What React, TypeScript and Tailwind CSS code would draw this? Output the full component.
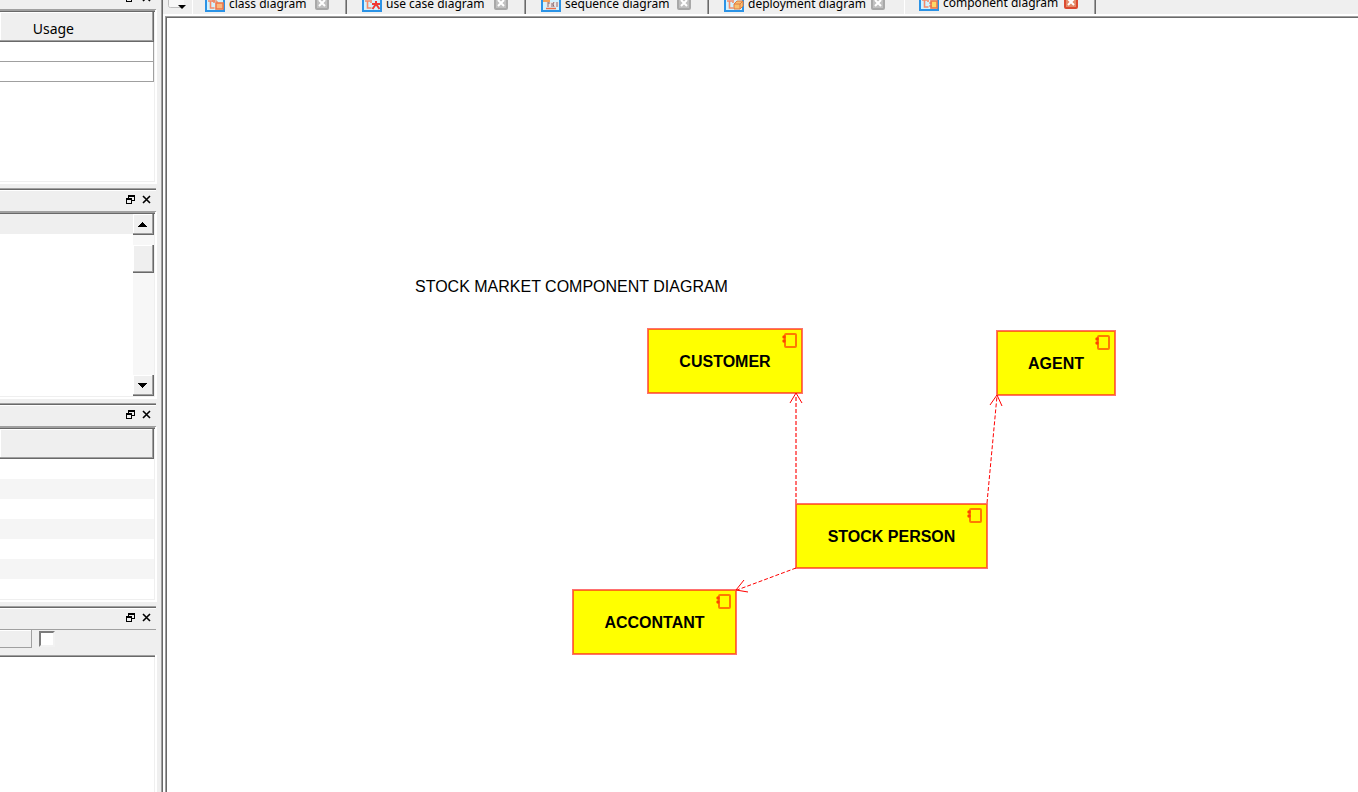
import React from "react";

type TabKind = "class" | "usecase" | "sequence" | "deployment" | "component";

const tabs: { kind: TabKind; label: string; box: string; active?: boolean }[] = [
  { kind: "class", label: "class diagram", box: "w-[154px] pl-3 pr-[17px]" },
  { kind: "usecase", label: "use case diagram", box: "w-[179px] pl-[15px] pr-[17px]" },
  { kind: "sequence", label: "sequence diagram", box: "w-[183px] pl-[15px] pr-[17px]" },
  { kind: "deployment", label: "deployment diagram", box: "w-[196px] pl-[15px] pr-[19px]" },
  { kind: "component", label: "component diagram", box: "w-[191px] pl-[14px] pr-[17px]", active: true },
];

function TabIcon({ kind }: { kind: TabKind }) {
  return (
    <svg width="20" height="16" viewBox="0 0 20 16" className="shrink-0" aria-hidden="true">
      <rect x="1" y="1" width="18" height="14" fill="#d3f2fe" stroke="#2b93e6" strokeWidth="2" />
      {kind === "sequence" ? (
        <>
          <rect x="2" y="2" width="7" height="4" fill="#f3a25c" />
          <rect x="5" y="6" width="13" height="5" fill="#ede6e4" />
          <path d="M7 6v5M9 7H7M11 7v4M13 6l-1 2 1 3M16 6v5" stroke="#8a6c72" fill="none" />
          <path d="M5 12.500h10" stroke="#f0704a" strokeWidth="1.500" />
        </>
      ) : (
        <path d="M3 5h5M5.500 5v7h4M9 3v4" stroke="#f58a6a" strokeWidth="1.600" fill="none" />
      )}
      {kind === "class" && (
        <>
          <rect x="11" y="7" width="7" height="6" fill="#fbb980" stroke="#f0784c" strokeWidth="1.600" />
          <path d="M7 5h5v2" stroke="#f0784c" fill="none" />
        </>
      )}
      {kind === "deployment" && (
        <>
          <path d="M10 8l3-3h6v5l-3 3h-6z" fill="#f8c070" stroke="#e07a42" />
          <path d="M10 8h6v5M16 8l3-3" fill="none" stroke="#e07a42" />
        </>
      )}
      {kind === "component" && (
        <>
          <rect x="12" y="6" width="6" height="7" fill="#ffd967" stroke="#f0784c" strokeWidth="1.600" />
          <path d="M10 8h3M10 11h3" stroke="#ee6b45" />
        </>
      )}
      {kind === "usecase" && (
        <path d="M10 8h8M14 5v4M14 8l-3.500 5M14 8l3.500 5" stroke="#f03a34" strokeWidth="2" fill="none" />
      )}
    </svg>
  );
}

function DiagramTab({ kind, label, box, active }: (typeof tabs)[number]) {
  const edge =
    kind === "deployment"
      ? "border-r border-white"
      : "border-r border-[#696969] shadow-[inset_-1px_0_0_#a0a0a0]";
  return (
    <div className={`flex h-[14px] shrink-0 items-start ${edge} ${box}`}>
      <div className={`flex h-5 grow items-center ${active ? "-mt-[7px]" : "-mt-[6px]"}`}>
        <TabIcon kind={kind} />
        <a href={`#${kind}`} className="ml-1 whitespace-nowrap">
          {label}
        </a>
        <button
          aria-label={`Close ${label}`}
          className={`mb-0.5 ml-auto flex h-[14px] w-[14px] shrink-0 items-center justify-center rounded-[2px] border-2 ${
            active ? "border-[#dc4a30] bg-[#e48a68]" : "border-[#a8a8a8] bg-[#c0c0c0]"
          }`}
        >
          <svg width="8" height="8" viewBox="0 0 8 8" aria-hidden="true">
            <path d="M1 1l6 6M7 1l-6 6" stroke="#fff" strokeWidth="2" />
          </svg>
        </button>
      </div>
    </div>
  );
}

function DockTitle({ name, className = "" }: { name: string; className?: string }) {
  return (
    <header
      className={`flex h-6 w-[156px] shrink-0 flex-col border-t border-b border-[#a0a0a0] bg-[#efefef] ${className}`}
    >
      <div className="h-0.5 border-t border-b border-t-[#696969] border-b-white" />
      <div className="flex items-start justify-end gap-[7px] pt-1 pr-[5px]">
        <button aria-label={`Float ${name}`}>
          <svg width="9" height="9" viewBox="0 0 9 9" shapeRendering="crispEdges" aria-hidden="true">
            <path d="M2 0h7v6H6V5h2V2H3v1H2zM0 3h6v6H0zM1 5v3h4V5z" fillRule="evenodd" />
          </svg>
        </button>
        <button aria-label={`Close ${name}`}>
          <svg width="9" height="9" viewBox="0 0 9 9" aria-hidden="true">
            <path d="M1 1l7 7M8 1l-7 7" stroke="#000" strokeWidth="1.600" />
          </svg>
        </button>
      </div>
    </header>
  );
}

function Frame({ className, children }: { className: string; children?: React.ReactNode }) {
  return (
    <div className={`flex w-[157px] flex-col border-r-2 border-b-2 border-white ${className}`}>
      <div className="h-0.5 shrink-0 border-t border-b border-t-[#a0a0a0] border-b-[#696969]" />
      <div className="flex grow flex-col border-r border-b border-[#efefef] bg-white">{children}</div>
    </div>
  );
}

const raised =
  "border-r border-b border-[#696969] bg-[#efefef] shadow-[inset_-1px_-1px_0_#a0a0a0,inset_1px_1px_0_#ffffff]";

function ScrollArrow({ down }: { down?: boolean }) {
  return (
    <button
      aria-label={down ? "Scroll down" : "Scroll up"}
      className={`flex h-[21px] w-full shrink-0 items-center justify-center pr-px ${raised}`}
    >
      <svg width="9" height="5" viewBox="0 0 9 5" shapeRendering="crispEdges" aria-hidden="true">
        <path d={down ? "M0 0h9L5 5H4z" : "M0 5h9L5 0H4z"} />
      </svg>
    </button>
  );
}

function ComponentNode({ name, place }: { name: string; place: string }) {
  return (
    <div
      className={`absolute flex h-[66px] items-center justify-center border border-[#ff7070] bg-[#ffff00] pt-px text-base font-bold text-black shadow-[inset_0_0_0_1px_#ff7010] ${place}`}
    >
      {name}
      <svg width="16" height="16" viewBox="0 0 16 16" className="absolute top-[3px] right-1" aria-hidden="true">
        <rect x="3" y="2" width="11" height="13" rx="1" fill="none" stroke="#ff7a00" strokeWidth="2" />
        <circle cx="2" cy="5" r="1.700" fill="#ff4400" />
        <circle cx="2" cy="9" r="1.700" fill="#ff4400" />
      </svg>
    </div>
  );
}

const nodes = [
  { name: "CUSTOMER", place: "top-[310px] left-[480px] w-[156px]" },
  { name: "AGENT", place: "top-[312px] left-[829px] w-[120px]" },
  { name: "STOCK PERSON", place: "top-[485px] left-[628px] w-[193px]" },
  { name: "ACCONTANT", place: "top-[571px] left-[405px] w-[165px]" },
];

export default function App() {
  return (
    <div className="flex h-screen overflow-hidden bg-[#efefef] text-black">
      <aside className="flex w-[161px] shrink-0 flex-col font-['Noto_Sans',sans-serif]">
        <DockTitle name="overview" className="-mt-[14px]" />
        <Frame className="mb-1 h-[174px] shrink-0">
          <table className="w-full border-separate border-spacing-0">
            <thead>
              <tr>
                <th className={`h-[30px] p-0 pt-1 pr-[79px] text-right text-sm font-normal ${raised}`}>
                  Usage
                </th>
              </tr>
            </thead>
            <tbody>
              <tr>
                <td className="h-5 border-r border-b border-[#a0a0a0] p-0" />
              </tr>
              <tr>
                <td className="h-5 border-r border-b border-[#a0a0a0] p-0" />
              </tr>
            </tbody>
          </table>
        </Frame>

        <DockTitle name="list" />
        <Frame className="mb-1 h-[187px] shrink-0">
          <div className="flex grow">
            <div className="grow">
              <div className="h-5 bg-[#efefef]" />
            </div>
            <div className="flex w-[21px] flex-col bg-[#f7f7f7]">
              <ScrollArrow />
              <div className={`mt-[10px] h-7 ${raised}`} />
              <div className="grow" />
              <ScrollArrow down />
            </div>
          </div>
        </Frame>

        <DockTitle name="properties" />
        <Frame className="mb-1 h-[175px] shrink-0">
          <div className={`h-[30px] ${raised}`} />
          {[0, 1, 2, 3, 4, 5, 6].map((row) => (
            <div key={row} className="h-5 even:bg-white odd:bg-[#f5f5f5]" />
          ))}
        </Frame>

        <DockTitle name="documentation" />
        <div className="flex h-[25px] shrink-0 items-start gap-[7px]">
          <button
            aria-label="Documentation view"
            className="h-[18px] w-8 border-r border-b border-[#a0a0a0] shadow-[inset_0_1px_0_#ffffff]"
          />
          <input
            type="checkbox"
            aria-label="Show as HTML"
            className="mt-px h-4 w-4 appearance-none border-2 border-t-[#7c7c7c] border-r-[#f2f2f2] border-b-[#f2f2f2] border-l-[#7c7c7c] bg-white"
          />
        </div>
        <Frame className="-mb-1 grow" />
      </aside>

      <main className="flex min-w-0 grow flex-col border-l border-[#a0a0a0]">
        <div className="flex grow flex-col border-l border-[#696969]">
          <nav className="flex h-[14px] shrink-0 font-['Noto_Sans',sans-serif] text-xs">
            <button
              aria-label="Tab list"
              className="flex h-[14px] w-[30px] shrink-0 items-start border-r border-white pl-[5px]"
            >
              <svg width="20" height="9" viewBox="0 0 20 9" aria-hidden="true">
                <path d="M.5 0v5.500q0 2 2 2h11" fill="#f5f5f5" stroke="#bdbdbd" />
                <path d="M1 0h15v5H12v2H2l-1-1z" fill="#f7f7f7" />
                <path d="M10 5h8l-4 4z" />
              </svg>
            </button>
            {tabs.map((t) => (
              <DiagramTab key={t.kind} {...t} />
            ))}
          </nav>
          <div className="flex grow flex-col border-t-2 border-l-2 border-white">
            <div className="flex grow flex-col border-t border-l border-[#a0a0a0]">
              <section className="relative grow overflow-hidden border-t border-l border-[#696969] bg-white font-['Liberation_Sans',Arial,sans-serif]">
                <h1 className="absolute top-[257px] left-[248px] text-base whitespace-nowrap">
                  STOCK MARKET COMPONENT DIAGRAM
                </h1>
                {nodes.map((n) => (
                  <ComponentNode key={n.name} {...n} />
                ))}
                <svg className="pointer-events-none absolute inset-0 h-full w-full" aria-hidden="true">
                  <g transform="translate(-167 -18)" fill="none" stroke="#ff0000">
                    <path d="M796 503V395" stroke="#ff7070" strokeWidth="2" strokeDasharray="4 2" />
                    <path d="M790 403l6-10 6 10" />
                    <path d="M987 503L997 396" strokeDasharray="4 2" />
                    <path d="M990 405l7-10 5 11" />
                    <path d="M796 568L737 590" strokeDasharray="4 2" />
                    <path d="M744 580l-8 10 12 2" />
                  </g>
                </svg>
              </section>
            </div>
          </div>
        </div>
      </main>
    </div>
  );
}
